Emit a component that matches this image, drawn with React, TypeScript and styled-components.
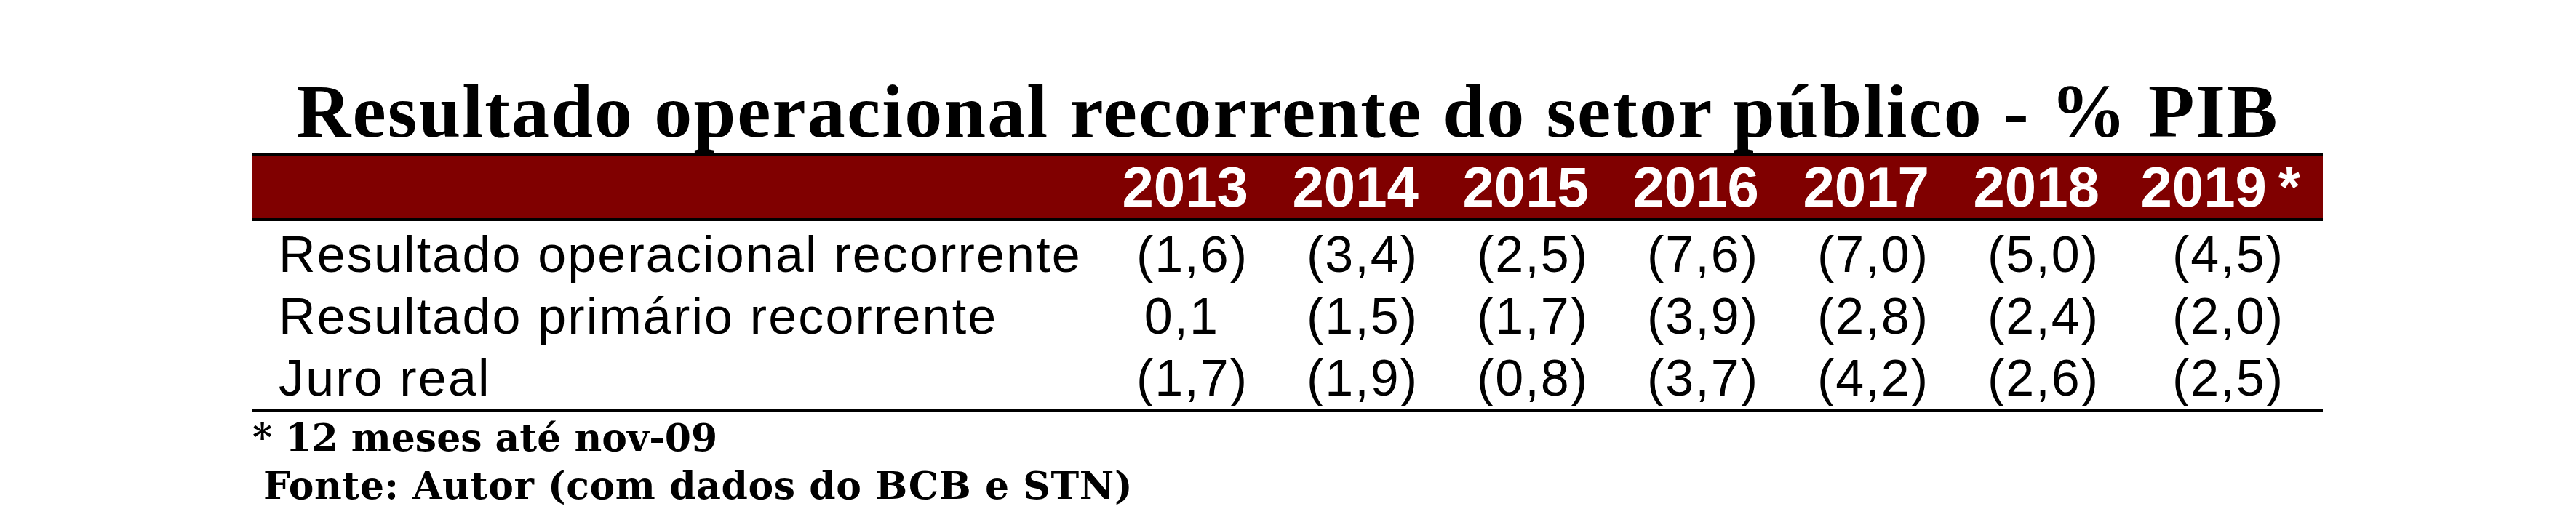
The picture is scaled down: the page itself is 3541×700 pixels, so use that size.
import React from "react";
import styled, { createGlobalStyle } from "styled-components";

const years = ["2013", "2014", "2015", "2016", "2017", "2018", "2019 *"];

const rows = [
  {
    label: "Resultado operacional recorrente",
    values: ["(1,6)", "(3,4)", "(2,5)", "(7,6)", "(7,0)", "(5,0)", "(4,5)"],
  },
  {
    label: "Resultado primário recorrente",
    values: ["0,1", "(1,5)", "(1,7)", "(3,9)", "(2,8)", "(2,4)", "(2,0)"],
  },
  {
    label: "Juro real",
    values: ["(1,7)", "(1,9)", "(0,8)", "(3,7)", "(4,2)", "(2,6)", "(2,5)"],
  },
];

const GlobalStyle = createGlobalStyle`
  body {
    margin: 0;
    background: #fff;
    color: #000;
  }
`;

const Page = styled.div`
  width: 2846px;
  margin-left: 347px;
  padding-top: 101px;
`;

const Title = styled.h1`
  margin: 0 0 5px;
  font-family: "Liberation Serif", "Times New Roman", serif;
  font-weight: 700;
  font-size: 104px;
  line-height: 104px;
  letter-spacing: 2.1px;
  text-align: center;
  white-space: nowrap;
`;

const Grid = styled.div`
  display: grid;
  grid-template-columns: 1135px repeat(6, 234px) 307px;
  align-items: center;
`;

const HeaderBand = styled(Grid)`
  height: 86px;
  background: #800000;
  border-top: 4px solid #000;
  border-bottom: 4px solid #000;
`;

const Year = styled.div<{ $last?: boolean }>`
  font-family: "Liberation Sans", Arial, sans-serif;
  font-weight: 700;
  font-size: 78px;
  line-height: 86px;
  color: #fff;
  text-align: right;
  white-space: pre;
  padding-right: ${(p) => (p.$last ? "31px" : "0")};
`;

const Star = styled.span`
  margin-left: -6px;
`;

const Body = styled.div`
  padding-top: 4px;
  border-bottom: 4px solid #000;
`;

const Row = styled(Grid)`
  height: 85px;
  font-family: "Liberation Sans", Arial, sans-serif;
  font-size: 70px;
  line-height: 85px;
`;

const Label = styled.div`
  padding-left: 36px;
  letter-spacing: 2.15px;
  white-space: nowrap;
`;

const Value = styled.div<{ $last?: boolean; $pos?: boolean }>`
  text-align: right;
  letter-spacing: 2px;
  padding-right: ${(p) => (p.$last ? 53 : 0) + (p.$pos ? 40 : 0)}px;
`;

const Notes = styled.div`
  padding-top: 2px;
  font-family: "DejaVu Serif", "Liberation Serif", serif;
  font-weight: 700;
  font-size: 52px;
  line-height: 66px;
  white-space: nowrap;
`;

const Note = styled.div<{ $indent?: boolean }>`
  padding-left: ${(p) => (p.$indent ? "15px" : "0")};
  letter-spacing: ${(p) => (p.$indent ? "0.6px" : "0")};
`;

export default function App() {
  return (
    <>
      <GlobalStyle />
      <Page>
        <Title>Resultado operacional recorrente do setor público - % PIB</Title>
        <HeaderBand>
          <div />
          {years.map((y, i) => {
            const [num, star] = y.split(" ");
            return (
              <Year key={y} $last={i === years.length - 1}>
                {num}
                {star && <Star> {star}</Star>}
              </Year>
            );
          })}
        </HeaderBand>
        <Body>
          {rows.map((r) => (
            <Row key={r.label}>
              <Label>{r.label}</Label>
              {r.values.map((v, i) => (
                <Value
                  key={i}
                  $last={i === r.values.length - 1}
                  $pos={!v.startsWith("(")}
                >
                  {v}
                </Value>
              ))}
            </Row>
          ))}
        </Body>
        <Notes>
          <Note>* 12 meses até nov-09</Note>
          <Note $indent>Fonte: Autor (com dados do BCB e STN)</Note>
        </Notes>
      </Page>
    </>
  );
}
